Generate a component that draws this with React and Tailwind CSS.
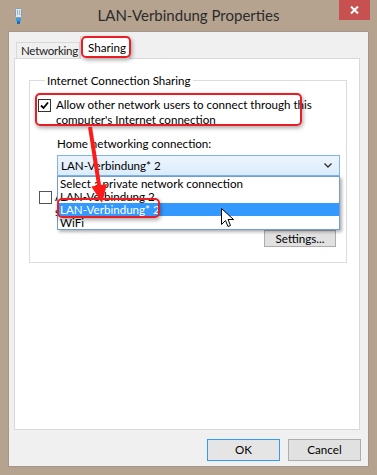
export default function App() {
  return (
    <div className="relative w-[377px] h-[475px] bg-[#b5a390] flex flex-col font-['Lato',sans-serif] text-[11.6px] text-black overflow-hidden">
      {/* title bar */}
      <div className="h-[31px] grid grid-cols-[1fr_auto_1fr] shrink-0">
        <div className="pl-[14px] pt-[8px]">
          <svg width="9" height="16" viewBox="0 0 9 16">
            <rect x="1.5" y="0.5" width="6" height="9" rx="1" fill="#dbe8f2" stroke="#8a9aa8" />
            <rect x="3" y="2" width="1" height="5" fill="#9fb6c8" />
            <rect x="5" y="2" width="1" height="5" fill="#9fb6c8" />
            <rect x="2" y="10" width="5" height="3" fill="#3a9be0" />
            <rect x="3" y="13" width="3" height="3" fill="#1f6fb8" />
          </svg>
        </div>
        <div className="text-[15px] leading-[30px] text-[#2b2b2b]">LAN-Verbindung Properties</div>
        <div className="flex justify-end pr-[7px]">
          <div className="w-[31px] h-[20px] bg-[#c75050] flex items-center justify-center">
            <svg width="9" height="8" viewBox="0 0 9 8">
              <path d="M1 0.5 L8 7.5 M8 0.5 L1 7.5" stroke="#fff" strokeWidth="2" />
            </svg>
          </div>
        </div>
      </div>

      {/* client area */}
      <div className="mx-[8px] mb-[8px] flex-1 bg-[#f0f0f0] border border-[#a4978a] flex flex-col pl-[5px] pr-[8px] pt-[4px]">
        {/* tabs */}
        <div className="flex items-end h-[22px] pl-[2px]">
          <div className="h-[16px] w-[64px] border border-b-0 border-[#d9d9d9] bg-[#f0f0f0] pl-[4px] leading-[15px] text-[#1e1e1e] whitespace-nowrap tracking-[-0.3px]">
            Networking
          </div>
          <div className="relative z-10 -mb-px h-[23px] w-[50px] border border-b-0 border-[#d9d9d9] bg-white pl-[7px] leading-[21px]">
            Sharing
          </div>
        </div>

        {/* panel */}
        <div className="h-[372px] bg-white border border-[#d9d9d9] pl-[14px] pr-[12px] pt-[14px] shrink-0">
          <fieldset className="h-[190px] border border-[#dcdcdc] pt-[9px] pl-[8px] pr-[6px] flex flex-col">
            <legend className="ml-[7px] px-[2px] leading-[15px]">Internet Connection Sharing</legend>

            <div className="flex items-start">
              <div className="mt-[2px] w-[13px] h-[13px] border border-[#333] bg-white flex items-center justify-center shrink-0">
                <svg width="9" height="9" viewBox="0 0 9 9">
                  <path d="M1 4.5 L3.5 7 L8 1.5" fill="none" stroke="#000" strokeWidth="1.8" />
                </svg>
              </div>
              <div className="ml-[5px] leading-[15px]">
                Allow other network users to connect through this
                <br />
                computer's Internet connection
              </div>
            </div>

            <div className="mt-[9px] ml-[19px] leading-[15px]">Home networking connection:</div>

            <div className="relative mt-[4px] ml-[19px] h-[21px] border border-[#7eb4ea] bg-gradient-to-b from-[#ecf4fc] to-[#dcecfc] flex items-center pl-[3px] pr-[7px] z-20">
              <span className="flex-1">LAN-Verbindung* 2</span>
              <svg width="8" height="5" viewBox="0 0 8 5">
                <path d="M0.5 0.5 L4 4 L7.5 0.5" fill="none" stroke="#333" strokeWidth="1.4" />
              </svg>

              <div className="absolute left-[-1px] right-[-1px] top-[20px] border border-[#6f9dd4] bg-white shadow-[2px_2px_3px_rgba(0,0,0,0.3)] flex flex-col">
                <div className="h-[13px] leading-[13px] pl-[2px]">Select a private network connection</div>
                <div className="h-[13px] leading-[13px] pl-[2px]">LAN-Verbindung 2</div>
                <div className="h-[13px] leading-[13px] pl-[2px] bg-[#3399ff] text-white">LAN-Verbindung* 2</div>
                <div className="h-[13px] leading-[13px] pl-[2px]">WiFi</div>
              </div>
            </div>

            <div className="flex items-start mt-[13px] ml-[1px]">
              <div className="mt-[2px] w-[13px] h-[13px] border border-[#555] bg-white shrink-0" />
              <div className="ml-[3px] leading-[15px]">
                Allow other network users to control or disable the
                <br />
                shared Internet connection
              </div>
            </div>

            <div className="self-end mr-[4px] mt-[11px] w-[72px] h-[17px] border border-[#adadad] bg-[#e1e1e1] flex items-center justify-center leading-[15px]">
              Settings...
            </div>
          </fieldset>
        </div>

        {/* buttons */}
        <div className="flex justify-end gap-[8px] mt-[9px] -mr-px">
          <div className="w-[73px] h-[22px] border border-[#3399ff] bg-[#e5e5e5] flex items-center justify-center">OK</div>
          <div className="w-[73px] h-[22px] border border-[#adadad] bg-[#e1e1e1] flex items-center justify-center">Cancel</div>
        </div>
      </div>

      {/* annotations */}
      <div className="absolute left-[81px] top-[36px] w-[50px] h-[22px] border-2 border-[#ea1c24] rounded-[5px] shadow-[1px_2px_4px_rgba(0,0,0,0.35)] z-30" />
      <div className="absolute left-[35px] top-[93px] w-[267px] h-[33px] border-2 border-[#ea1c24] rounded-[5px] shadow-[1px_2px_4px_rgba(0,0,0,0.35)] z-30" />
      <div className="absolute left-[57px] top-[198px] w-[103px] h-[20px] border-2 border-[#ea1c24] rounded-[5px] shadow-[1px_2px_4px_rgba(0,0,0,0.35)] z-30" />

      <svg className="absolute left-0 top-0 z-40 pointer-events-none" width="377" height="475" viewBox="0 0 377 475">
        <line x1="90" y1="127" x2="99.2" y2="186" stroke="#ff1a1a" strokeWidth="4" />
        <polygon points="102,203 107.1,184 91.3,186.5" fill="#ff1a1a" />
      </svg>

      <svg className="absolute left-[221px] top-[208px] z-40" width="13" height="20" viewBox="0 0 13 20">
        <path d="M0.5 0.5 L0.5 16.5 L4.5 12.5 L7 18.5 L9.5 17.5 L7 11.5 L12.5 11.5 Z" fill="#fff" stroke="#000" strokeWidth="1" strokeLinejoin="round" />
      </svg>
    </div>
  );
}
